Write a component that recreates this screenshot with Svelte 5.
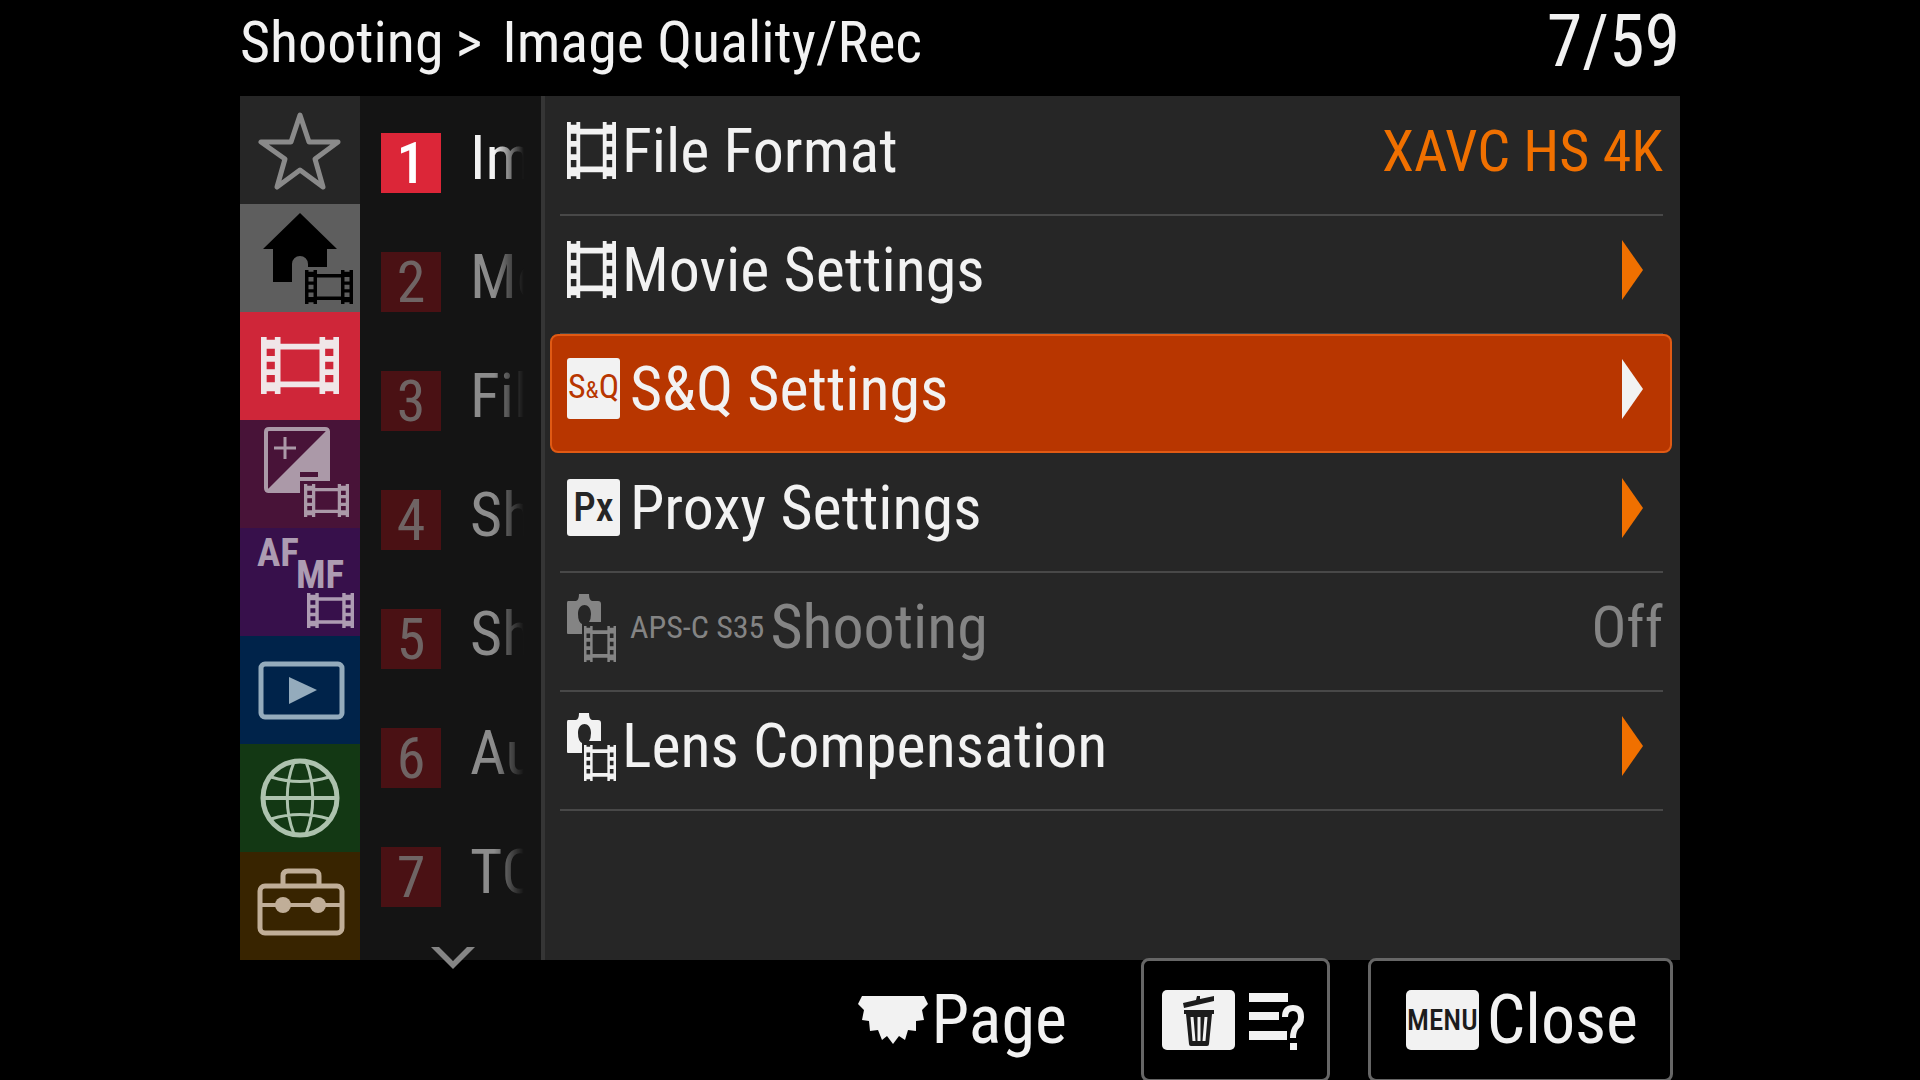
<script lang="ts">
  type Row = { icon: string; label: string; prefix?: string; value?: string; off?: boolean };

  const tabs = [
    { id: 'star', name: 'My Menu' },
    { id: 'home', name: 'Main' },
    { id: 'movie', name: 'Shooting' },
    { id: 'exposure', name: 'Exposure/Color' },
    { id: 'focus', name: 'Focus' },
    { id: 'play', name: 'Playback' },
    { id: 'globe', name: 'Network' },
    { id: 'setup', name: 'Setup' },
  ];

  const groups = ['Im', 'Me', 'Fil', 'Sh', 'Sh', 'Au', 'TC'];

  const rows: Row[] = [
    { icon: 'film', label: 'File Format', value: 'XAVC HS 4K' },
    { icon: 'film', label: 'Movie Settings' },
    { icon: 'sq', label: 'S&Q Settings' },
    { icon: 'px', label: 'Proxy Settings' },
    { icon: 'camera', prefix: 'APS-C S35', label: 'Shooting', value: 'Off', off: true },
    { icon: 'camera', label: 'Lens Compensation' },
  ];

  let tab = $state('movie');
  let group = $state(0);
  let selected = $state(2);

  // film strip frame: two perforated rails joined by two bars
  function film(x: number, y: number, w: number, h: number): string {
    const r = w > h * 1.2 ? w * 0.25 : w * 0.27;
    const hw = r * 0.42;
    const hh = h * 0.13;
    const n = h * 0.05;
    const bar = h * 0.1;
    let d = '';
    for (const rx of [x, x + w - r]) {
      const a = rx + (r - hw) / 2;
      const b = a + hw;
      d += `M${rx} ${y}H${a}V${y + n}H${b}V${y}H${rx + r}V${y + h}H${b}V${y + h - n}H${a}V${y + h}H${rx}Z`;
      for (const k of [0.27, 0.5, 0.73]) {
        d += `M${a} ${y + h * k - hh / 2}V${y + h * k + hh / 2}H${b}V${y + h * k - hh / 2}Z`;
      }
    }
    for (const by of [y + h * 0.12, y + h * 0.88 - bar]) {
      d += `M${x + r} ${by}H${x + w - r}V${by + bar}H${x + r}Z`;
    }
    return d;
  }
</script>

{#snippet tabIcon(id: string)}
  <svg viewBox="0 0 120 108" aria-hidden="true">
    {#if id === 'star'}
      <path class="line" stroke-width="5" d="M60 19 69 46H98L75 63 83 91 60 74 37 91 45 63 21 46H51Z" />
    {:else if id === 'home'}
      <path d="M60 9 97 45H87V63H68V60A8 8 0 0 0 52 60V78H33V45H23Z" />
      <path fill-rule="evenodd" d={film(65, 66, 48, 34)} />
    {:else if id === 'movie'}
      <path fill-rule="evenodd" d={film(21, 25, 78, 57)} />
    {:else if id === 'exposure'}
      <path class="line" stroke-width="4" d="M60 71H29Q26 71 26 68V12Q26 9 29 9H85Q88 9 88 12V59" />
      <path d="M86 11H90V61H60V73H28V69Z" />
      <path d="M60 52H78V57H60Z" fill="#481338" />
      <path class="line" stroke-width="3" d="M34 28H56M45 17V39" />
      <path fill-rule="evenodd" d={film(64, 64, 45, 33)} />
    {:else if id === 'focus'}
      <text x="17" y="38">AF</text>
      <text x="56" y="60">MF</text>
      <path fill-rule="evenodd" d={film(67, 65, 47, 35)} />
    {:else if id === 'play'}
      <rect class="line" stroke-width="5" x="21" y="28" width="81" height="53" rx="4" />
      <path d="M49 41 77 54 49 68Z" />
    {:else if id === 'globe'}
      <circle class="line" stroke-width="5" cx="60" cy="54" r="37" />
      <path class="line" stroke-width="4" d="M23 54H97" />
      <path class="line" stroke-width="3" d="M54 18C45 40 45 68 54 90M66 18C75 40 75 68 66 90M31 33Q60 42 89 33M31 75Q60 66 89 75" />
    {:else}
      <path class="line" stroke-width="5" d="M43 34V24Q43 19 48 19H74Q79 19 79 24V34" />
      <rect class="line" stroke-width="5" x="20" y="34" width="82" height="47" rx="5" />
      <path class="line" stroke-width="4" d="M20 53H102" />
      <circle cx="43" cy="53" r="8" />
      <circle cx="78" cy="53" r="8" />
    {/if}
  </svg>
{/snippet}

{#snippet rowIcon(id: string)}
  {#if id === 'sq'}
    <span class="chip sq">S<small>&amp;</small>Q</span>
  {:else if id === 'px'}
    <span class="chip px">Px</span>
  {:else if id === 'camera'}
    <svg class="cam" viewBox="0 0 49 70" aria-hidden="true">
      <path d="M1 9H9Q12 8 12 2H22Q22 8 25 9H31Q34 9 34 12V30H22Q24 27 24 22C24 10 11 10 11 22Q11 30 15 32V42H1Q0 42 0 41V11Q0 9 1 9Z" />
      <path fill-rule="evenodd" d={film(17, 34, 32, 36)} />
    </svg>
  {:else}
    <svg class="film" viewBox="0 0 49 57" aria-hidden="true">
      <path fill-rule="evenodd" d={film(0, 0, 49, 57)} />
    </svg>
  {/if}
{/snippet}

<div class="screen">
  <header>
    <h1><span>Shooting</span><span class="sep">&gt;</span><span>Image Quality/Rec</span></h1>
    <span class="count">7/59</span>
  </header>

  <main>
    <nav class="tabs">
      {#each tabs as t}
        <button class="tab {t.id}" aria-label={t.name} aria-pressed={tab === t.id} onclick={() => (tab = t.id)}>
          {@render tabIcon(t.id)}
        </button>
      {/each}
    </nav>

    <nav class="groups">
      {#each groups as g, i}
        <button class="group" class:on={group === i} onclick={() => (group = i)}>
          <span class="num">{i + 1}</span>
          <span class="name">{g}</span>
        </button>
      {/each}
      <svg class="more" viewBox="0 0 44 22" aria-hidden="true"><path d="M0 0H8L22 14 36 0H44L22 22Z" /></svg>
    </nav>

    <div class="panel">
      {#each rows as row, i}
        <button class="row" class:selected={selected === i} disabled={row.off} onclick={() => (selected = i)}>
          {@render rowIcon(row.icon)}
          {#if row.prefix}<span class="prefix">{row.prefix}</span>{/if}
          <span class="label">{row.label}</span>
          {#if row.value}
            <span class="value">{row.value}</span>
          {:else}
            <svg class="arrow" viewBox="0 0 21 60" aria-hidden="true"><path d="M0 0 21 30 0 60Z" /></svg>
          {/if}
        </button>
      {/each}
    </div>
  </main>

  <footer>
    <div class="page">
      <svg class="dial" viewBox="0 0 70 48" aria-hidden="true">
        <path d="M4 0H66L70 8 64 14 66 24 58 25V35L50 34 47 44 41 40 35 48 29 40 24 44 20 34 12 35 11 25 4 24 6 14 0 8Z" />
      </svg>
      <span>Page</span>
    </div>
    <button class="help" aria-label="Help">
      <svg class="trash" viewBox="0 0 73 60" aria-hidden="true">
        <rect width="73" height="60" rx="5" fill="#f2f2f2" />
        <path d="M21 13 34 10 35 6H38V9L52 6V11L22 18ZM22 20H52V24H50L47 54Q47 56 45 56H29Q27 56 27 54L24 24H22Z" fill="#1c1c1c" />
        <path d="M30 27 32 51M37 27V51M44 27 42 51" stroke="#f2f2f2" stroke-width="3" />
      </svg>
      <svg class="lines" viewBox="0 0 56 62" aria-hidden="true">
        <path d="M0 4H39V13H0ZM0 23H30V31H0ZM0 42H38V51H0Z" />
        <path d="M36 28Q36 19 44 19Q52 19 52 28Q52 34 48 37Q44 41 44 49" fill="none" stroke="#000" stroke-width="10" />
        <path d="M36 28Q36 19 44 19Q52 19 52 28Q52 34 48 37Q44 41 44 49" fill="none" stroke="#f2f2f2" stroke-width="6" />
        <path d="M41 54H48V61H41Z" />
      </svg>
    </button>
    <button class="close"><span class="menu">MENU</span><span>Close</span></button>
  </footer>
</div>

<style>
  :global(body) { background: #000; }
  .screen {
    display: grid;
    grid-template-rows: 96px 1fr 122px;
    width: 75%;
    min-height: 100vh;
    margin: 0 auto;
    color: #f2f2f2;
    font-family: "Roboto Condensed", Roboto, "Liberation Sans", sans-serif;
    font-size: 62px;
    line-height: 1;
    white-space: nowrap;
  }
  button {
    margin: 0;
    padding: 0;
    border: 0;
    background: none;
    color: inherit;
    font: inherit;
    text-align: left;
    cursor: pointer;
  }
  svg { display: block; flex: none; fill: currentColor; }

  header {
    display: flex;
    align-items: center;
    justify-content: space-between;
    padding-bottom: 12px;
  }
  h1 { display: flex; margin: 0; font-size: 58px; font-weight: 400; }
  .sep { padding: 0 20px 0 12px; }
  .count { font-size: 72px; }

  main { display: grid; grid-template-columns: 120px 181px 1fr; }

  /* main tabs */
  .tabs { display: grid; grid-template-rows: repeat(8, 1fr); }
  .tab { display: grid; place-items: center; }
  .tab svg { width: 120px; height: 108px; }
  .line { fill: none; stroke: currentColor; stroke-linejoin: round; }
  .tab text { font-size: 39px; font-weight: 700; }
  .star { background: #262626; color: #8a8a8a; }
  .home { background: #5e5e5e; color: #000; }
  .movie { background: #cf2639; color: #f0e6e8; }
  .exposure { background: #481338; color: #ab99a8; }
  .focus { background: #37104b; color: #ad9cb2; }
  .play { background: #00234a; color: #94abbc; }
  .globe { background: #133814; color: #adc2ae; }
  .setup { background: #382400; color: #c0ae98; }

  /* numbered groups, names fade out at the panel edge */
  .groups { position: relative; padding-top: 7px; background: #141414; }
  .group {
    display: flex;
    align-items: center;
    gap: 29px;
    width: 100%;
    height: 119px;
    padding-left: 21px;
    color: #8c8c8c;
  }
  .num {
    flex: none;
    width: 60px;
    background: #4a1114;
    color: #6f6464;
    font-size: 58px;
    line-height: 60px;
    text-align: center;
  }
  .name {
    flex: 1;
    padding-bottom: 10px;
    mask-image: linear-gradient(to right, #000 24px, transparent 54px);
  }
  .on { color: #f2f2f2; }
  .on .num { background: #dc2638; color: #fff; font-weight: 500; }
  .more { position: absolute; left: 71px; bottom: -9px; width: 44px; height: 22px; color: #858585; }

  .panel { padding: 0 8px 0 5px; border-left: 4px solid #353535; background: #262626; }
  .row {
    position: relative;
    display: flex;
    align-items: center;
    gap: 6px;
    width: 100%;
    height: 119px;
    padding: 0 9px 10px 17px;
  }
  .row::after {
    content: '';
    position: absolute;
    inset: auto 9px -1px 10px;
    height: 2px;
    background: #484848;
  }
  .row.selected {
    border: 2px solid #e05a14;
    border-radius: 8px;
    background: #b83600;
    padding: 0 7px 10px 15px;
  }
  .row.selected::after { display: none; }
  .row:disabled { color: #848484; }
  .film { width: 49px; height: 57px; }
  .cam { width: 49px; height: 70px; }
  .chip {
    display: flex;
    align-items: baseline;
    justify-content: center;
    width: 53px;
    margin-right: 4px;
    border-radius: 3px;
    background: #f2f2f2;
    color: #262626;
    line-height: 57px;
  }
  .sq { color: #b83600; font-size: 34px; }
  .sq small { font-size: 24px; }
  .px { font-weight: 500; font-size: 40px; }
  .prefix { margin-left: 8px; font-size: 32px; }
  .value { margin-left: auto; color: #f07000; font-size: 58px; }
  .row:disabled .value { color: #848484; }
  .arrow { width: 21px; height: 60px; margin: 0 20px 0 auto; color: #f07000; }
  .selected .arrow { color: #f2f2f2; }

  footer {
    display: flex;
    justify-content: flex-end;
    gap: 38px;
    margin-top: -2px;
    padding-right: 7px;
    font-size: 68px;
    z-index: 1;
  }
  .page { display: flex; align-items: center; gap: 4px; margin-right: 36px; }
  .dial { width: 70px; height: 48px; }
  .help, .close {
    display: flex;
    align-items: center;
    border: 3px solid #666;
    border-radius: 8px;
    background: #000;
  }
  .help { gap: 14px; padding: 0 22px 0 18px; }
  .trash { width: 73px; height: 60px; }
  .lines { width: 56px; height: 62px; }
  .close { gap: 8px; padding: 0 32px 0 35px; }
  .menu {
    width: 73px;
    border-radius: 5px;
    background: #f2f2f2;
    color: #1c1c1c;
    font-size: 29px;
    font-weight: 500;
    line-height: 60px;
    text-align: center;
  }
</style>
